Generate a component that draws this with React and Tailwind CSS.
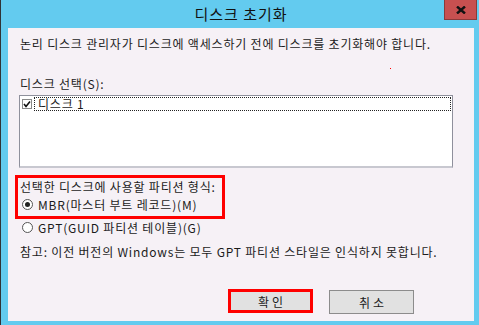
export default function App() {
  const font = { fontFamily: '"Noto Sans CJK KR", "Noto Sans", sans-serif' };
  return (
    <div
      className="w-[479px] h-[325px] bg-[#63cbef] border-l border-[#303336] flex flex-col text-[12px] leading-[17px] tracking-[0.8px] text-[#1b1b1b] overflow-hidden"
      style={font}
    >
      {/* Title bar */}
      <div className="relative h-[28px] shrink-0 flex items-center justify-center">
        <span className="text-[15px] leading-[20px] tracking-[1px] text-[#111] -mt-[1px] ml-[2px]">디스크 초기화</span>
        <button className="absolute top-0 right-[2px] w-[33px] h-[20px] bg-[#c75050] border border-t-0 border-[#8a3a3a] flex items-center justify-center">
          <svg width="10" height="8" viewBox="0 0 10 8">
            <path d="M1 0.5 L9 7.5 M9 0.5 L1 7.5" stroke="#111" strokeWidth="2.4" />
          </svg>
        </button>
      </div>

      {/* Body */}
      <div className="relative flex-1 ml-[7px] mr-[5px] mb-[4px] bg-[#f6f1f6] flex flex-col pt-[7px]">
        <span className="absolute left-[382px] top-[40px] w-[1px] h-[1px] bg-[#ff0000]" />

        <p className="ml-[12px] whitespace-nowrap">논리 디스크 관리자가 디스크에 액세스하기 전에 디스크를 초기화해야 합니다.</p>

        <p className="ml-[12px] mt-[23px]">디스크 선택(S):</p>

        <div className="ml-[11px] mt-[3px] w-[434px] h-[73px] bg-white border border-[#8f909c] border-b-2 border-b-[#c8c8d0] pt-[1px] pl-[2px] pr-[1px]">
          <div className="flex items-center h-[14px]">
            <span className="w-[10px] h-[10px] border border-[#8a8a8a] bg-white flex items-center justify-center shrink-0">
              <svg width="8" height="8" viewBox="0 0 8 8">
                <path d="M1 4 L3 6.5 L7 1.5" stroke="#111" strokeWidth="1.6" fill="none" />
              </svg>
            </span>
            <div className="flex-1 ml-[2px] h-[14px] border border-dotted border-[#222] flex items-center pl-[3px]">
              <span className="leading-[12px]">디스크 1</span>
            </div>
          </div>
        </div>

        <div className="ml-[7px] mt-[7px] w-[210px] h-[44px] border-[3px] border-[#ff0000] flex flex-col">
          <p className="pl-[2px] whitespace-nowrap">선택한 디스크에 사용할 파티션 형식:</p>
          <label className="flex items-center mt-[1px] pl-[4px]">
            <span className="w-[11px] h-[11px] rounded-full border border-[#555] bg-white flex items-center justify-center shrink-0">
              <span className="w-[5px] h-[5px] rounded-full bg-[#222]" />
            </span>
            <span className="ml-[5px] whitespace-nowrap">MBR(마스터 부트 레코드)(M)</span>
          </label>
        </div>

        <label className="flex items-center ml-[14px]">
          <span className="w-[11px] h-[11px] rounded-full border border-[#555] bg-white shrink-0" />
          <span className="ml-[5px]">GPT(GUID 파티션 테이블)(G)</span>
        </label>

        <p className="ml-[12px] mt-[7px] whitespace-nowrap">참고: 이전 버전의 Windows는 모두 GPT 파티션 스타일은 인식하지 못합니다.</p>

        <div className="flex ml-[220px] mt-[29px] gap-[16px]">
          <button className="w-[85px] h-[24px] bg-[#e1e1e1] border-[3px] border-[#ff0000] flex items-center justify-center tracking-[3px] pl-[3px]">
            확인
          </button>
          <button className="w-[85px] h-[24px] mt-[1px] bg-[#e1e1e1] border border-[#8c8c8c] flex items-center justify-center tracking-[3px] pl-[3px]">
            취소
          </button>
        </div>
      </div>
    </div>
  );
}
